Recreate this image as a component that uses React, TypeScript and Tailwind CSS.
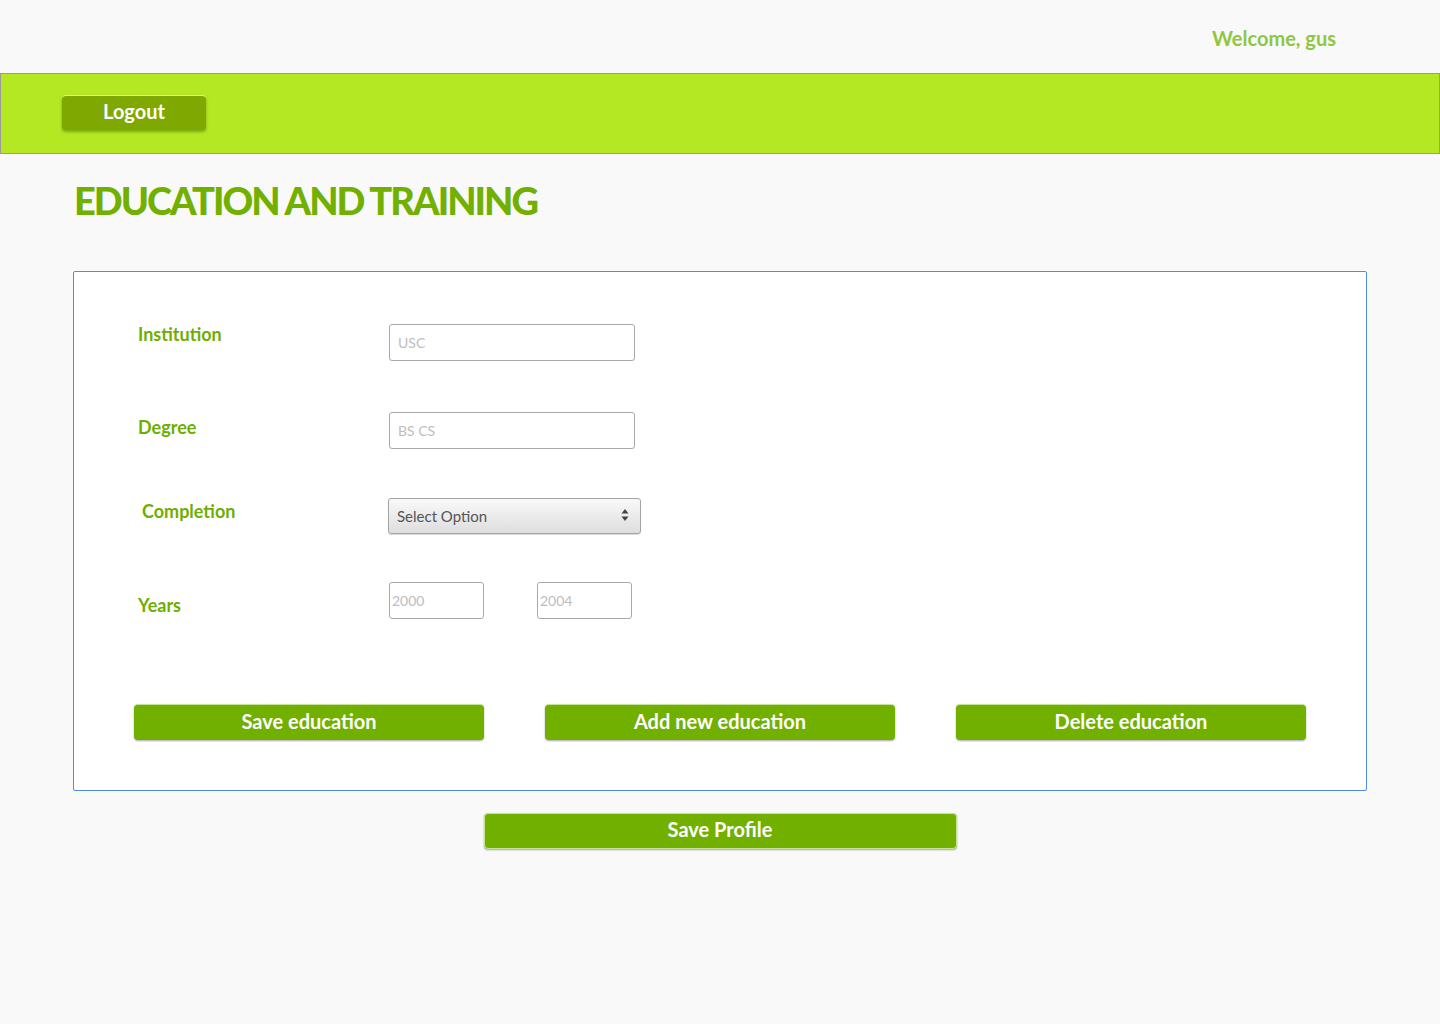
import React from "react"

const font = { fontFamily: "Lato, 'Noto Sans', sans-serif" }

function GreenButton({ label, className }: { label: string; className?: string }) {
  return (
    <button
      className={`h-[36px] pb-[4px] rounded-[4px] bg-[#72b000] text-white text-[20px] font-bold leading-none border-t border-[#c6e39a] shadow-[0_1px_2px_rgba(0,0,0,0.35)] ${className ?? ""}`}
    >
      {label}
    </button>
  )
}

function TextBox({ placeholder, className }: { placeholder: string; className?: string }) {
  return (
    <input
      placeholder={placeholder}
      className={`h-[37px] border border-[#a9a9a9] rounded-[3px] bg-white text-[14px] text-[#555] placeholder:text-[#bdbdbd] outline-none ${className ?? ""}`}
    />
  )
}

export default function App() {
  return (
    <div style={font} className="min-h-[1024px] w-full bg-[#f9f9f9]">
      {/* Top welcome strip */}
      <div className="h-[73px] flex items-center justify-end pr-[104px] pt-[3px]">
        <span className="text-[20px] font-bold text-[#8fc740]">Welcome, gus</span>
      </div>

      {/* Green nav bar */}
      <div className="h-[81px] bg-[#b3e823] border border-[#9a9a9a] flex items-center pl-[61px] pb-[2px]">
        <button className="w-[144px] h-[35px] pb-[4px] rounded-[4px] bg-[#7fa800] text-white text-[20px] font-bold border-t border-[#e6f5b0] shadow-[0_2px_3px_rgba(60,90,0,0.45)]">
          Logout
        </button>
      </div>

      <div className="px-[73px]">
        <h1 className="mt-[22px] pl-[1px] text-[38px] font-black text-[#72b000] tracking-[-2px] leading-[48px]">
          EDUCATION AND TRAINING
        </h1>

        {/* Card */}
        <div className="mt-[47px] bg-white border border-[#4a8fe0] rounded-[2px] pt-[52px] pb-[50px]">
          <div className="pl-[64px] flex flex-col">
            <div className="flex items-start">
              <div className="w-[251px] -mt-[2px] text-[18px] font-bold leading-[24px] text-[#6fae00]">Institution</div>
              <TextBox placeholder="USC" className="w-[246px] px-[8px]" />
            </div>

            <div className="flex items-start mt-[51px]">
              <div className="w-[251px] mt-[3px] text-[18px] font-bold leading-[24px] text-[#6fae00]">Degree</div>
              <TextBox placeholder="BS CS" className="w-[246px] px-[8px]" />
            </div>

            <div className="flex items-start mt-[49px]">
              <div className="w-[250px] mt-[1px] pl-[4px] text-[18px] font-bold leading-[24px] text-[#6fae00]">Completion</div>
              <div className="relative w-[253px] h-[36px]">
                <select
                  defaultValue=""
                  className="appearance-none w-full h-full rounded-[3px] border border-[#a4a4a4] bg-gradient-to-b from-[#f9f9f9] to-[#dedede] pl-[8px] text-[15px] text-[#555] shadow-[0_1px_1px_rgba(0,0,0,0.15)] outline-none"
                >
                  <option value="">Select Option</option>
                  <option>Completed</option>
                  <option>In progress</option>
                </select>
                <svg
                  className="absolute right-[12px] top-[10px] pointer-events-none"
                  width="8"
                  height="14"
                  viewBox="0 0 8 14"
                >
                  <path d="M4 1 L7.5 5.5 H0.5 Z" fill="#444" />
                  <path d="M4 13 L7.5 8.5 H0.5 Z" fill="#444" />
                </svg>
              </div>
            </div>

            <div className="flex items-start mt-[48px]">
              <div className="w-[251px] mt-[11px] text-[18px] font-bold leading-[24px] text-[#6fae00]">Years</div>
              <div className="flex gap-[53px]">
                <TextBox placeholder="2000" className="w-[95px] px-[2px]" />
                <TextBox placeholder="2004" className="w-[95px] px-[2px]" />
              </div>
            </div>
          </div>

          <div className="mt-[85px] px-[60px] flex justify-between">
            <GreenButton label="Save education" className="w-[350px]" />
            <GreenButton label="Add new education" className="w-[350px]" />
            <GreenButton label="Delete education" className="w-[350px]" />
          </div>
        </div>

        <div className="flex justify-center mt-[22px]">
          <GreenButton label="Save Profile" className="w-[473px] border border-[#9a9a9a]" />
        </div>
      </div>
    </div>
  )
}
